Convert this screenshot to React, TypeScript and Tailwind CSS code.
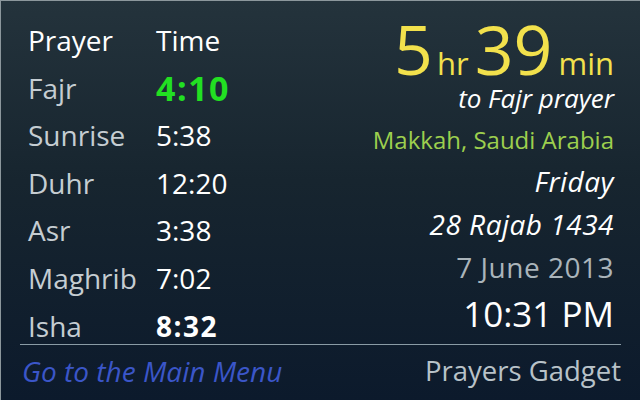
const prayers = [
  { name: "Fajr", time: "4:10", kind: "next" },
  { name: "Sunrise", time: "5:38", kind: "" },
  { name: "Duhr", time: "12:20", kind: "" },
  { name: "Asr", time: "3:38", kind: "" },
  { name: "Maghrib", time: "7:02", kind: "" },
  { name: "Isha", time: "8:32", kind: "last" },
];

function timeClass(kind: string) {
  if (kind === "next") return "text-[34px] font-bold tracking-[1.5px] text-[#22e022]";
  if (kind === "last") return "font-bold tracking-[1.5px] text-white";
  return "text-white";
}

export default function App() {
  return (
    <div
      className="relative h-[400px] w-[640px] overflow-hidden border-l border-t border-[#8c979c] bg-[linear-gradient(180deg,#24333c_0%,#17252f_45%,#0c1a2c_100%)]"
      style={{ fontFamily: '"Open Sans", "Noto Sans", sans-serif' }}
    >
      <div className="flex h-[343px] justify-between pl-[27px] pr-[26px]">
        {/* prayer table */}
        <div className="grid grid-cols-[128px_auto] auto-rows-[47.6px] pt-[16px] text-[28px] leading-[47.6px]">
          <div className="text-white">Prayer</div>
          <div className="text-white">Time</div>
          {prayers.map((p) => (
            <div key={p.name} className="contents">
              <div className="text-[#c5cdd2]">{p.name}</div>
              <div className={timeClass(p.kind)}>{p.time}</div>
            </div>
          ))}
        </div>

        {/* countdown & date */}
        <div className="flex flex-col items-end text-right">
          <div className="flex h-[77px] items-baseline pt-[18px] text-[#f2e14c]">
            <span className="text-[68px] leading-[60px]">5</span>
            <span className="ml-[4px] text-[31px] leading-[60px]">hr</span>
            <span className="ml-[6px] text-[68px] leading-[60px]">39</span>
            <span className="ml-[6px] text-[31px] leading-[60px]">min</span>
          </div>
          <div className="h-[41px] text-[26px] italic leading-[41px] text-white">to Fajr prayer</div>
          <div className="h-[41px] text-[24px] leading-[41px] text-[#9dcf4e]">Makkah, Saudi Arabia</div>
          <div className="h-[43px] text-[28px] italic leading-[43px] tracking-[0.5px] text-white">Friday</div>
          <div className="h-[42px] text-[28px] italic leading-[42px] tracking-[0.5px] text-white">28 Rajab 1434</div>
          <div className="h-[45px] text-[28px] leading-[45px] tracking-[0.5px] text-[#aab4ba]">7 June 2013</div>
          <div className="h-[48px] text-[35px] leading-[48px] text-white">10:31 PM</div>
        </div>
      </div>

      <div className="mx-[19px] border-t border-[#8a9ba5]" />

      <div className="flex items-center justify-between pl-[21px] pr-[19px] pt-[9px] leading-[34px]">
        <a href="#" className="text-[28px] italic text-[#3b56c8]">
          Go to the Main Menu
        </a>
        <span className="text-[27.5px] text-[#b8c2c8]">Prayers Gadget</span>
      </div>
    </div>
  );
}
